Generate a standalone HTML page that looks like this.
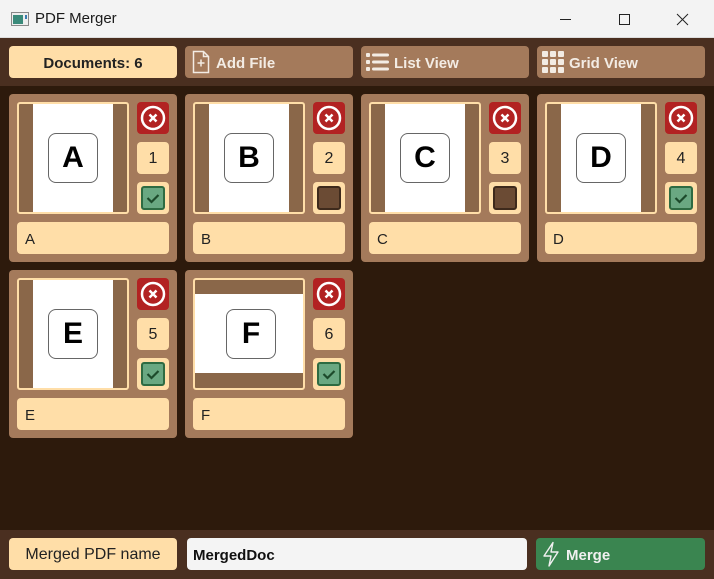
<!DOCTYPE html>
<html><head><meta charset="utf-8"><style>
*{box-sizing:border-box;margin:0;padding:0}
body{width:714px;height:579px;overflow:hidden;background:#2d1a0c;font-family:"Liberation Sans",sans-serif;position:relative}
.abs{position:absolute}
#title{left:0;top:0;width:714px;height:38px;background:#f3f3f3;border-bottom:1px solid #ddd}
#title .t{left:35px;top:10px;font-size:15px;color:#1a1a1a}
#tb{left:0;top:38px;width:714px;height:48px;background:#4a2f20}
.btn{height:32px;top:8px;width:168px;border-radius:4px;background:#a47a5b;color:#f3ece4;font-size:15px;font-weight:bold;display:flex;align-items:center;padding-top:2px}
.light{background:#ffdea8;color:#222}
#bb{left:0;top:530px;width:714px;height:49px;background:#4a2f20}
.card{width:168px;height:168px;background:#a47a5b;border-radius:4px}
.th{left:8px;top:8px;width:112px;height:112px;border:2px solid #ffdea8;border-radius:3px;background:#8a6749;overflow:hidden}
.wp{left:14px;top:0;width:80px;height:108px;background:#fff}
.wl{left:0;top:14px;width:108px;height:79px;background:#fff}
.lb{width:50px;height:50px;border:1.5px solid #666;border-radius:8px;background:#fff;font-size:30px;font-weight:bold;display:flex;align-items:center;justify-content:center;color:#000}
.x{left:128px;top:8px;width:32px;height:32px;background:#b22222;border-radius:4px}
.n{left:128px;top:48px;width:32px;height:32px;background:#ffdea8;border-radius:4px;font-size:16px;display:flex;align-items:center;justify-content:center;color:#222;padding-top:2px}
.cb{left:128px;top:88px;width:32px;height:32px;background:#ffdea8;border-radius:4px}
.cbi{left:4px;top:4px;width:24px;height:24px;border-radius:3px}
.on{background:#6aa882;border:2px solid #2e6b42}
.off{background:#6b4b34;border:2px solid #3e2a1c}
.nm{left:8px;top:128px;width:152px;height:32px;background:#ffdea8;border-radius:4px;font-size:15px;color:#222;padding:9px 0 0 8px}
</style></head><body>
<div id="title" class="abs">
<svg class="abs" style="left:11px;top:12px" width="18" height="14"><rect x="0.5" y="0.5" width="17" height="13" fill="#eee" stroke="#888"/><rect x="2" y="3" width="10" height="9" fill="#3a8a7a"/><rect x="14" y="3" width="2" height="4" fill="#3a7ab0"/></svg>
<div class="abs t">PDF Merger</div>
<svg class="abs" style="left:560px;top:12px" width="140" height="16"><line x1="0" y1="7.5" x2="11" y2="7.5" stroke="#222"/><rect x="59.5" y="2.5" width="10" height="10" fill="none" stroke="#222"/><path d="M117 2L128 13M128 2L117 13" stroke="#222"/></svg>
</div>
<div id="tb" class="abs">
<div class="abs btn light" style="left:9px;justify-content:center">Documents: 6</div>
<div class="abs btn" style="left:185px"><svg style="margin:-2px 6px 0 7px" width="18" height="24"><path d="M1.5 1.5h10l5 5v16h-15z M11.5 1.5v5h5" fill="none" stroke="#f3ece4" stroke-width="1.5"/><path d="M9 9.5v7M5.5 13h7" stroke="#f3ece4" stroke-width="1.5"/></svg>Add File</div>
<div class="abs btn" style="left:361px"><svg style="margin:-2px 4px 0 5px" width="24" height="20"><g fill="#f3ece4"><rect x="0" y="1" width="4" height="4" rx="1"/><rect x="0" y="8" width="4" height="4" rx="1"/><rect x="0" y="15" width="4" height="4" rx="1"/><rect x="6" y="1.5" width="17" height="3" rx="1.5"/><rect x="6" y="8.5" width="17" height="3" rx="1.5"/><rect x="6" y="15.5" width="17" height="3" rx="1.5"/></g></svg>List View</div>
<div class="abs btn" style="left:537px"><svg style="margin:-2px 4px 0 5px" width="23" height="22"><g fill="#f3ece4"><rect x="0" y="0" width="6" height="6" rx="1"/><rect x="8" y="0" width="6" height="6" rx="1"/><rect x="16" y="0" width="6" height="6" rx="1"/><rect x="0" y="8" width="6" height="6" rx="1"/><rect x="8" y="8" width="6" height="6" rx="1"/><rect x="16" y="8" width="6" height="6" rx="1"/><rect x="0" y="16" width="6" height="6" rx="1"/><rect x="8" y="16" width="6" height="6" rx="1"/><rect x="16" y="16" width="6" height="6" rx="1"/></g></svg>Grid View</div>
</div>

<div class="abs card" style="left:9px;top:94px"><div class="abs th"><div class="abs wp"></div><div class="abs lb" style="left:29px;top:29px">A</div></div><div class="abs x"><svg width="32" height="32"><circle cx="16" cy="16" r="11" fill="none" stroke="#fff" stroke-width="2.5"/><path d="M12.5 12.5l7 7M19.5 12.5l-7 7" stroke="#fff" stroke-width="2.5"/></svg></div><div class="abs n">1</div><div class="abs cb"><div class="abs cbi on"><svg width="20" height="20"><path d="M4.5 10l4 4 7-7" fill="none" stroke="#1d4a2b" stroke-width="2.2"/></svg></div></div><div class="abs nm">A</div></div>

<div class="abs card" style="left:185px;top:94px"><div class="abs th"><div class="abs wp"></div><div class="abs lb" style="left:29px;top:29px">B</div></div><div class="abs x"><svg width="32" height="32"><circle cx="16" cy="16" r="11" fill="none" stroke="#fff" stroke-width="2.5"/><path d="M12.5 12.5l7 7M19.5 12.5l-7 7" stroke="#fff" stroke-width="2.5"/></svg></div><div class="abs n">2</div><div class="abs cb"><div class="abs cbi off"></div></div><div class="abs nm">B</div></div>

<div class="abs card" style="left:361px;top:94px"><div class="abs th"><div class="abs wp"></div><div class="abs lb" style="left:29px;top:29px">C</div></div><div class="abs x"><svg width="32" height="32"><circle cx="16" cy="16" r="11" fill="none" stroke="#fff" stroke-width="2.5"/><path d="M12.5 12.5l7 7M19.5 12.5l-7 7" stroke="#fff" stroke-width="2.5"/></svg></div><div class="abs n">3</div><div class="abs cb"><div class="abs cbi off"></div></div><div class="abs nm">C</div></div>

<div class="abs card" style="left:537px;top:94px"><div class="abs th"><div class="abs wp"></div><div class="abs lb" style="left:29px;top:29px">D</div></div><div class="abs x"><svg width="32" height="32"><circle cx="16" cy="16" r="11" fill="none" stroke="#fff" stroke-width="2.5"/><path d="M12.5 12.5l7 7M19.5 12.5l-7 7" stroke="#fff" stroke-width="2.5"/></svg></div><div class="abs n">4</div><div class="abs cb"><div class="abs cbi on"><svg width="20" height="20"><path d="M4.5 10l4 4 7-7" fill="none" stroke="#1d4a2b" stroke-width="2.2"/></svg></div></div><div class="abs nm">D</div></div>

<div class="abs card" style="left:9px;top:270px"><div class="abs th"><div class="abs wp"></div><div class="abs lb" style="left:29px;top:29px">E</div></div><div class="abs x"><svg width="32" height="32"><circle cx="16" cy="16" r="11" fill="none" stroke="#fff" stroke-width="2.5"/><path d="M12.5 12.5l7 7M19.5 12.5l-7 7" stroke="#fff" stroke-width="2.5"/></svg></div><div class="abs n">5</div><div class="abs cb"><div class="abs cbi on"><svg width="20" height="20"><path d="M4.5 10l4 4 7-7" fill="none" stroke="#1d4a2b" stroke-width="2.2"/></svg></div></div><div class="abs nm">E</div></div>

<div class="abs card" style="left:185px;top:270px"><div class="abs th"><div class="abs wl"></div><div class="abs lb" style="left:31px;top:29px">F</div></div><div class="abs x"><svg width="32" height="32"><circle cx="16" cy="16" r="11" fill="none" stroke="#fff" stroke-width="2.5"/><path d="M12.5 12.5l7 7M19.5 12.5l-7 7" stroke="#fff" stroke-width="2.5"/></svg></div><div class="abs n">6</div><div class="abs cb"><div class="abs cbi on"><svg width="20" height="20"><path d="M4.5 10l4 4 7-7" fill="none" stroke="#1d4a2b" stroke-width="2.2"/></svg></div></div><div class="abs nm">F</div></div>

<div id="bb" class="abs">
<div class="abs btn light" style="left:9px;width:168px;justify-content:center;font-weight:normal;font-size:16px">Merged PDF name</div>
<div class="abs btn" style="left:187px;width:340px;background:#f4f4f4;color:#111;font-weight:bold;font-size:15px;padding-left:6px">MergedDoc</div>
<div class="abs btn" style="left:536px;width:169px;background:#3a8550;color:#f0f0f0"><svg style="margin:-2px 6px 0 6px" width="18" height="26"><path d="M11 1.5L2 15h7l-2 10 9-14H9z" fill="none" stroke="#f0f0f0" stroke-width="1.4" stroke-linejoin="round"/></svg>Merge</div>
</div>
</body></html>
